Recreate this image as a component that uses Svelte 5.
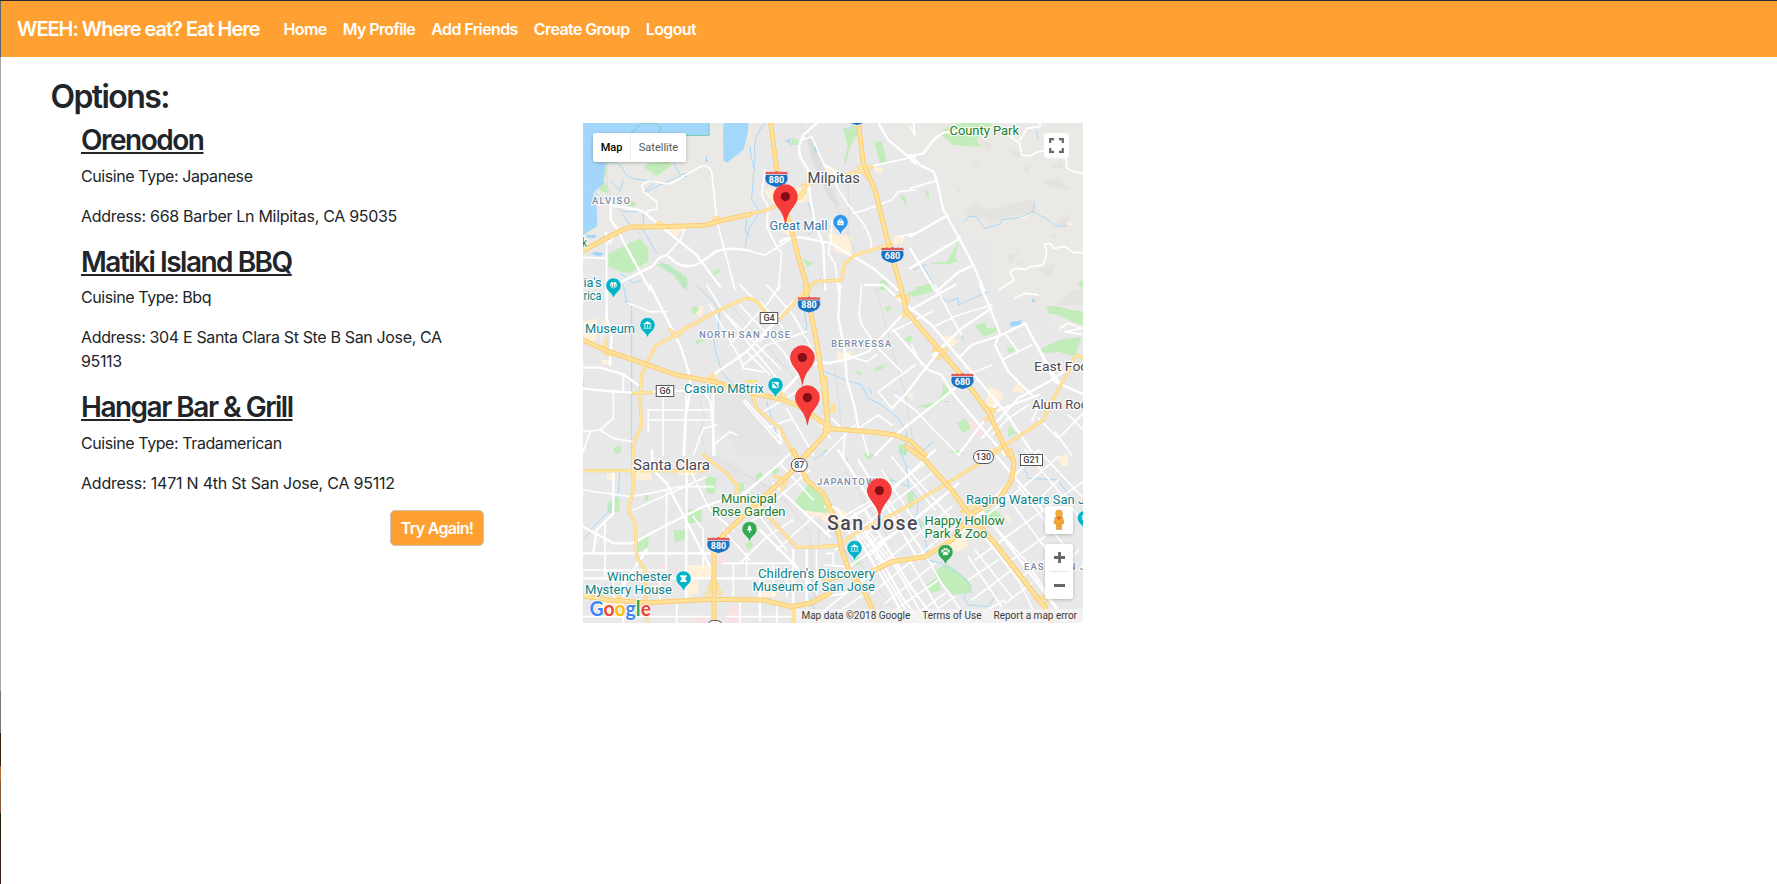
<script>
  const nav = ['Home', 'My Profile', 'Add Friends', 'Create Group', 'Logout'];
  const places = [
    { name: 'Orenodon', type: 'Japanese', address: '668 Barber Ln Milpitas, CA 95035', spacing: -0.3 },
    { name: 'Matiki Island BBQ', type: 'Bbq', address: '304 E Santa Clara St Ste B San Jose, CA 95113', spacing: -0.35 },
    { name: 'Hangar Bar & Grill', type: 'Tradamerican', address: '1471 N 4th St San Jose, CA 95112', spacing: -0.22 }
  ];

  // Map tiles: origin in map space, artwork drawn at three units per pixel.
  const tiles = [
    {
      x: 580, y: 120,
      hill: 'M9 9H510V270L375 312 150 318 60 350 9 390Z',
      water: 'M9 9H388V47H160L85 52 78 110 70 190 40 218 50 260 52 318 9 345ZM430 9H505V30L490 90 440 128 430 120ZM378 105L384 125H376ZM20 345H50L45 355 18 352ZM45 395L72 400 60 410 35 402Z',
      green: 'M68 60H85V125L75 180 85 220 60 212 50 195 76 182 68 130ZM158 40L185 9 240 20 225 45ZM205 130L265 125 275 135 230 168 190 140ZM85 400L180 355 205 385 205 425 150 460 120 455 85 440ZM225 432L265 432 320 470 325 495 312 508 280 465ZM390 470L415 445 420 455 395 472ZM150 240L170 250 160 263 140 255Z',
      beige: 'M245 322H320L285 352Z',
      river: 'M80 130Q120 120 130 150T190 180 205 205 240 195 320 170M9 190L60 230 95 240 130 275 190 275 190 310M130 285L150 320 190 330 230 400M240 425L300 470 320 510M500 300L495 330 510 350M120 460L160 490 185 480M9 215L60 240M95 185L120 215 130 180M280 125L300 165 325 160M430 40H500M430 60H498M432 80H490M435 100H480',
      rail: 'M80 110L82 200 105 260 180 340',
      thin: 'M230 270V245L190 215 185 195 205 183 270 192 360 140Q385 132 395 155L410 300 465 510M230 268L205 272 200 285M9 412L75 415M75 335L90 370 110 335M80 340V510M315 325L300 360 260 405',
      road: 'M92 245V300L115 330 130 365 210 510M100 258Q160 265 190 275L250 325 350 405 420 500M110 492L215 440 240 412 260 405 290 430Q330 450 365 425L410 393Q450 380 510 392',
      hwy: 'M9 392L120 333 150 321 240 320 375 316 430 300 510 283',
      yellow: 'M225 318Q240 300 250 318M400 310Q405 280 420 300'
    },
    {
      x: 745, y: 120,
      hill: 'M0 9H50L30 100 25 200 0 250ZM400 9H510V110L470 85Z',
      water: 'M205 80L220 85 214 100ZM125 60L135 55 133 70Z',
      green: 'M292 22L320 30 320 9 345 30 315 80 303 130 297 125 308 75ZM388 68L410 63 425 125 405 132ZM138 52L162 62 158 76 140 75ZM203 85L220 80 215 102ZM463 225L480 228 487 262ZM172 415L205 430 190 442ZM405 485L425 475 430 510H400Z',
      beige: 'M235 135H250L300 165 295 185 260 175ZM245 340L320 350 320 410 270 395ZM55 210L190 200 185 245 90 260ZM385 140L415 145 410 160 390 158ZM450 345L480 350 475 370 440 375ZM90 300H130L150 350 120 340Z',
      grey: 'M180 40L205 55 235 140 285 260 250 235 200 120Z',
      river: 'M60 9Q20 50 30 110L20 240 45 275 10 330 0 380M15 80Q20 130 30 150M190 250Q205 290 210 310T190 345M235 400Q240 440 235 500M300 30L320 20M120 60L140 75',
      rail: 'M165 9L200 80 245 200 290 290 330 400M215 500L240 440M310 180V330',
      thin: 'M240 135L265 150 275 200 310 255 355 310 375 350 380 385M60 150L50 225 70 260 65 320 95 380 110 400 100 510M0 390L60 405 140 355M260 300V340L250 400 270 430 280 510M460 350L510 340M350 145L510 110M170 60L200 50 240 140M325 280L375 265 440 240 460 215 510 210',
      road: 'M215 9L175 45 162 80 165 110 190 150 195 230 210 310 235 375 240 510M105 365Q130 350 170 353L260 370 300 395 385 445 460 510M395 0L430 60 490 110 510 130',
      hwy: 'M77 9L97 160 115 250 140 330 165 430 190 510M340 9L355 130 390 210 430 370 470 510',
      yellow: 'M0 283L60 272 100 255 150 240 170 220 185 195 220 180 300 165 355 150 380 140M190 505L210 485 290 480 300 430 330 405 440 372M150 240Q190 225 175 195M340 140L365 170'
    },
    {
      x: 910, y: 120,
      hill: 'M90 9H525V510H245V370L180 345 145 300 100 240 85 160 30 100 0 80V9Z',
      shade: 'M165 280L190 245 240 270 300 250 370 240 375 275 300 290 250 310 210 290 180 285ZM390 185L450 175 480 210 420 200ZM440 300L480 280 470 318 430 310ZM340 145L370 130 350 160ZM140 210L155 205 145 220ZM290 405L330 395 300 430ZM320 430L340 425 330 440ZM420 345L450 335 430 355ZM180 130L200 120 210 130ZM420 140L450 120 470 150ZM200 50L250 80 230 90ZM380 450L440 425 420 470ZM300 90L350 100 320 115Z',
      green: 'M88 40L125 15 160 9H250L200 60 215 82 130 75ZM40 208L55 215 60 245ZM50 428L110 425 150 360 135 410 142 425 110 434ZM503 495L525 470V510ZM10 505L60 490 80 510Z',
      river: 'M165 305L175 290 200 290 210 308 225 325 270 312 275 300 330 292 370 275 410 297 435 318 470 318M370 275L375 245M378 30L384 58M10 450L50 432M40 440L80 510',
      beige: 'M320 290L370 278 340 298ZM108 280L130 290 115 290ZM470 305L490 310 478 320Z',
      thin: 'M0 205L80 182M265 510L312 482 300 455 320 445 345 448 360 440 400 435 410 400 405 372 420 370 430 385 465 380 490 397 525 398M300 50L330 70 335 105 360 108 385 95 440 88 470 120 470 145 490 155 525 160M330 60L350 25 390 20V9M0 20L15 45 10 9',
      road: 'M0 105L30 135 70 155 80 180 100 270 145 350 190 435 222 510M0 108L40 100 75 55 100 38 150 34M0 350L105 290M0 445L150 355M80 515L140 460 190 435M0 385L75 510'
    },
    {
      x: 580, y: 285,
      grey2: 'M400 320L510 330 560 410 610 510H480L410 420Z',
      green: 'M332 72L345 62 358 72 340 90ZM345 170L365 155 370 165 350 180ZM100 488L120 480 125 500 105 508ZM200 55L210 50 205 60ZM9 280L15 300 9 315Z',
      beige: 'M9 110L50 100V160L30 180 9 170ZM340 80L370 60 365 100ZM75 95H85V115L60 180 65 130ZM70 225H90V238H65Z',
      river: 'M350 0L400 50 418 80 415 140 400 150 405 190 425 260 460 300M670 60L680 120 675 170M130 0L140 50M560 350L590 450M155 60V510M135 50H145V60',
      rail: 'M360 350L375 400 360 440 380 510M460 70L750 400M620 300L740 440',
      thin: 'M205 375V405H390M205 375H400M100 320V400L60 435 9 440M60 435L100 460 160 470M130 270V320M400 320V440L405 510M440 90L600 250M380 0L430 80 510 180 600 290M480 60L610 200 670 290M450 180L520 100 560 60 600 0M490 240L560 180 680 140M560 0L640 90 700 200M620 370L700 510M690 370L750 460M560 430L640 400M340 510L370 430 410 420M9 500L30 440M550 380L650 320M480 0L540 60M320 320L310 510M250 320V510M540 170L580 120 640 60M500 200L570 270M540 50L610 130M145 55L210 80 260 80M400 480L450 440 470 450M205 405V440M490 350L600 475M495 345L605 465M590 415L605 475M390 60L480 220 490 250 550 260',
      road: 'M9 248H60L130 268 175 300M9 310L50 315 180 325 250 317 390 318M80 0V100L95 150 90 240M210 0L250 80 300 180 325 255 330 290V320L318 390 312 510M370 320L392 350 400 440 400 510M400 285L405 265 480 215 510 190 640 50M610 320L680 245 720 230 750 235',
      hwy: 'M9 165L80 197 190 235 290 270 400 290 520 325 600 342 650 360 690 385 750 430M675 0L710 170 730 300 745 430M750 430L680 510',
      yellow: 'M160 510L163 470 185 420 180 340 185 270 205 225 225 185 300 140 400 85 490 42Q520 35 540 60L560 90 580 108 600 100 680 15M515 325L530 370 600 430 640 510M160 325L215 322M80 160L75 205 100 210M380 285L400 270 410 295M500 290L530 290 520 340M270 135L290 155 320 125M600 320L620 345'
    },
    {
      x: 825, y: 285,
      hill: 'M520 20L550 0H780V160L700 140 640 60Z',
      shade: 'M690 60L740 20 780 10V60ZM620 30L650 40 630 60Z',
      water: 'M555 112L590 105V120L556 125ZM620 42H628V52H620Z',
      green: 'M245 25L310 0 325 20 265 35ZM180 68L195 62 202 72 185 82ZM235 163L262 150 255 175ZM355 295L372 315 350 350 310 370 275 365 330 350 350 330ZM640 195L700 165 770 155 750 215 700 200 665 205ZM665 65L690 62 740 75 780 80V125L730 105 700 90 670 85ZM450 122L480 110 485 130 520 125 520 138 475 155ZM393 415L420 400 438 430 415 445ZM545 190L565 185V200L550 205ZM85 255L110 260 105 272ZM550 420L575 445 550 455ZM150 250L180 237 175 250 155 260ZM218 480L245 475V510H225ZM370 500L400 495 420 510Z',
      beige: 'M480 360L495 305 530 320 535 340 500 370ZM350 155L375 150 400 170 375 190ZM35 205L80 200 80 220 35 225ZM560 320L580 290 600 325ZM250 330L265 320 260 345Z',
      pink: 'M420 395L475 430 475 460 440 440Z',
      river: 'M0 260L60 285 110 300 130 340 170 360 220 400 245 440 240 510M330 10L345 35 370 50 400 40 400 60 490 20M135 310L140 325M410 150L415 165M270 475L290 500 325 470M360 350H370',
      rail: 'M150 0L200 190 240 320 270 510M30 250L50 430',
      thin: 'M110 0L102 90 110 120 160 190 230 260M325 125L400 90 500 60M330 0L360 60 410 150M530 225L620 180M540 145L580 200M270 240L160 320 200 370M440 265L500 240M100 430L160 390 200 420M20 400L60 440 55 510M550 400L610 360M640 400L700 460 780 380M690 440L740 510M60 210L125 230 155 210M210 330L270 375 400 510M110 440L130 510M0 510L90 420M650 340L620 410M550 400L500 450M320 80L200 140M730 390L780 440M570 40L600 25 640 30M705 130L730 115 770 130 720 140 780 150M290 240L260 180',
      road: 'M45 0L40 100 60 200 65 280 90 370 100 430M120 0H175L225 45 320 120 460 285 540 380 620 500M205 135L310 255 350 270 380 320 480 440 540 510M465 0L495 70 525 145 510 180 550 260 620 330M400 220L440 180 530 150 600 115 650 210 690 290 780 330M600 115L635 180 700 290M340 200L240 330 200 370M255 75L390 0M0 235L60 225 130 200 250 70M390 310L210 450 150 510M470 460L580 340 680 285 730 250M400 510L520 350M325 210L410 130 500 70M510 380L640 330',
      hwy: 'M225 0L245 80 340 190 400 260 490 380 550 510M0 430L150 442 210 450 260 470 300 510M0 280L8 400 0 440',
      yellow: 'M500 500L550 475 655 405 680 350 725 270 750 215Q760 205 780 225M325 195H365L340 220M480 370L510 375 480 405M215 35H250L235 95M0 380H25V360'
    },
    {
      x: 580, y: 450,
      grey2: 'M390 0L450 30 520 80 620 150 630 170 500 105 380 40Z',
      green: 'M315 180L365 175V215L320 222ZM375 75L410 85 405 130 380 130ZM640 160L690 95 740 160 740 190 660 180ZM80 160L118 140V185L85 190ZM170 270L205 257 205 290 175 307ZM280 240H315V270L285 277ZM495 285L510 270 520 285 505 300ZM525 75L545 65 550 85 530 95ZM460 100H492V120L475 128ZM195 135H205V152H195ZM220 235L240 230V242ZM570 55L590 50 600 65 580 75ZM725 0H745V15Z',
      beige: 'M320 345H395V385H355V430L320 440ZM165 65H215V90H170ZM650 175L750 190V220ZM80 70H105V90H82ZM50 440L130 455 100 500 60 480ZM290 55H350V75H295ZM530 400H590V440H540Z',
      pink: 'M415 290L435 290 438 345 415 340ZM440 470L480 465V518H440ZM335 500H385V518H335ZM240 340H265V355H240Z',
      river: 'M120 60L115 130 80 190 40 230 15 265M750 0L700 30M690 440L700 480',
      rail: 'M380 10L470 60 600 130 690 250 700 450M720 200L700 520',
      thin: 'M9 120L150 140 210 130 300 110 400 110M75 220V385M260 120L258 310V385M100 385V440M160 180L380 80M480 340L560 260 640 210M430 240L510 330M590 300L700 200M500 310V380M340 200L370 240V350M430 340H640M9 360H260M130 390V520M240 390V450M290 460V520M460 340V440M580 340V440M620 385V440M480 460V520M590 460V520M330 60L390 180 460 240M9 500H390M440 500H640M540 200L620 300M600 40L700 150M710 300V430M520 210L610 130 690 60M490 230L580 170',
      road: 'M215 0L220 60 260 100 390 350M9 230L100 280 160 280 230 240 370 170 430 150M9 310H390M9 385H640M100 70V190L50 240 40 310M320 60L318 450M540 240L640 340 700 410M580 100L750 260M640 300V470M680 290V470M470 150L600 40 640 0M540 385V510M200 300L100 450M650 60L720 120',
      hwy: 'M9 438L90 450 200 458 400 448 550 450 630 470 690 460 750 430M402 518V300L430 255 540 150 630 70 690 0M640 0L680 90 730 130 755 190',
      yellow: 'M9 62H160L380 62M158 0L160 120 145 180 165 220 170 320 195 360 200 518M370 15L440 70 475 110 465 140M530 160L650 292 750 290M640 465V518M60 435Q90 405 120 445M380 440L400 380 420 430M585 80L620 90 605 120'
    },
    {
      x: 825, y: 450,
      green: 'M325 365L365 340 430 390 442 428 385 435 350 400ZM305 405L335 380 350 420 320 430ZM480 180L515 180 540 210 500 230ZM245 130L265 125 268 160 255 180ZM280 200L300 225 285 235ZM115 15L130 5 150 15 130 30ZM55 20L70 25 68 40ZM190 80L205 90 195 105ZM85 320H105V345H90ZM275 0L300 15 285 25Z',
      beige: 'M380 280L420 250 430 290 400 305 360 290ZM700 20L730 10V45L710 50ZM540 190L560 210 550 220ZM30 170L70 190 50 240Z',
      river: 'M225 0L245 50 250 110 280 150 275 200 300 260 310 330 350 340M350 340L400 370 440 410 415 440 430 465 490 470 510 440M580 0L600 60 610 85 700 90 720 120 760 160M200 90L250 110M20 160L30 250 70 320 90 340',
      rail: 'M0 190L60 270 160 420 240 510M60 60L200 280',
      thin: 'M200 20L330 180M300 40L160 140 20 220M320 70L200 160 30 300M350 140L240 230 60 360M380 170L100 400M400 220L140 430M250 60L390 220M170 60L300 260M140 80L230 210 310 330M500 220L600 330 700 480M470 250L580 390 640 510M450 300L560 440M430 320L530 470M600 0L730 160 780 220M640 0L780 150M540 130L680 320M580 110L720 290M480 200L620 90 700 20M530 270L670 170 780 90M450 330L600 220M560 330L660 260M590 380L700 300M430 390L520 330M440 450L560 360M540 460L620 400M210 480L340 390M180 460L330 340M250 510L360 430M290 510L390 440M430 510L540 450M160 340L260 510M200 330L300 510M250 325L360 510M310 330L350 400 430 510M5 310H25V345M0 345L60 350M0 480L100 400M20 500L120 430M0 200L40 200M700 90L640 150M760 300L720 350',
      road: 'M100 30L210 210 280 330M40 0L180 220M0 170Q40 165 50 200L80 260M90 190L230 440 280 510M60 200L200 430 240 510M120 180L250 400 330 510M0 250L180 140 330 0M320 300L420 240 640 0M460 170L540 270 660 430 720 510M420 180L330 60 280 0M500 0L550 60 680 210M160 280L270 210 400 100M0 440L60 430 200 330',
      white: 'M100 250L170 340M108 245L178 335M116 240L186 330M124 235L194 325M105 270L140 240M120 295L160 260M135 315L180 280M150 330L195 300',
      hwy: 'M245 -10L300 30 380 120 430 190 510 280 650 460 690 518M135 368L200 335 300 320 380 270 440 190 520 150 560 90 567 40 555 0M0 140L35 220 50 300 75 370 110 410 130 450 160 518M0 390L60 375 135 368',
      yellow: 'M0 287H40L90 250 200 195 350 110 480 30 525 0M410 185Q470 150 520 160M420 230L480 230M630 445Q680 430 660 480'
    }
  ];
  const kinds = ['hill', 'shade', 'grey', 'grey2', 'beige', 'pink', 'green', 'water', 'river', 'rail', 'thin', 'white', 'road', 'yellowcase', 'yellow', 'hwycase', 'hwy'];

  // text, x, baseline, width, size, class
  const labels = [
    ['County Park', 949.5, 134.5, 69.5, 13, 'park'],
    ['Milpitas', 807.5, 183, 52.5, 14, 'city'],
    ['Great Mall', 769.5, 230, 58, 13, 'mall'],
    ['ALVISO', 592, 204.3, 38, 9.5, 'area'],
    ['k', 582, 247, 5, 13, 'park'],
    ["ia's", 583.5, 286.5, 18, 13, 'poi'],
    ['rica', 583.5, 299.5, 18, 13, 'poi'],
    ['Museum', 585, 332.5, 50, 13, 'poi'],
    ['NORTH SAN JOSE', 699, 338.3, 91, 9.5, 'area'],
    ['BERRYESSA', 831, 347, 60, 9.5, 'area'],
    ['Casino M8trix', 684, 392.5, 80, 13, 'poi'],
    ['East Foothills', 1034, 370.5, 84, 13.5, 'city'],
    ['Alum Rock', 1032, 408.5, 62, 13.5, 'city'],
    ['Santa Clara', 633, 470, 77, 14, 'city'],
    ['Municipal', 721, 502.5, 56, 13, 'park'],
    ['Rose Garden', 712, 515.5, 73.5, 13, 'park'],
    ['JAPANTOWN', 817, 485.3, 65, 9.5, 'area'],
    ['San Jose', 827, 529.8, 90.5, 19.5, 'city big'],
    ['Happy Hollow', 924.5, 524.5, 80, 13, 'park'],
    ['Park & Zoo', 924.5, 537.5, 63, 13, 'park'],
    ['Raging Waters San Jose', 966, 503.5, 140, 13, 'poi'],
    ["Children's Discovery", 758, 577.8, 117, 13, 'poi'],
    ['Museum of San Jose', 752.5, 590.8, 122.5, 13, 'poi'],
    ['Winchester', 607, 580.5, 65, 13, 'poi'],
    ['Mystery House', 585, 593.5, 87, 13, 'poi'],
    ['EAST SAN JOSE', 1024, 570.3, 82, 9.5, 'area']
  ];
  const shields = [['880', 776.5, 179], ['680', 892.5, 255], ['880', 809, 304.5], ['680', 962.5, 381], ['880', 718.5, 545], ['', 857, 117]];
  const boxes = [['G4', 769, 318, 17.5], ['G6', 665, 391, 17.5], ['G21', 1031.5, 460, 22]];
  const ovals = [['87', 799.3, 465, 16], ['130', 983.5, 457, 20], ['', 715, 627, 16]];
  const pois = [
    [840.5, 222, '#2e96ea', 'bag'], [613.5, 285.5, '#00b4c8', 'fan'], [647.5, 325, '#00b4c8', 'museum'],
    [775.5, 385, '#00b4c8', 'dice'], [749.5, 529, '#34a853', 'tree'], [683.5, 578.5, '#00b4c8', 'tower'],
    [854.5, 548, '#00b4c8', 'museum'], [945.5, 552, '#34a853', 'paw'], [1085, 518, '#00b4c8', 'fan']
  ];
  const glyphs = {
    bag: 'M-3.5-1.5H3.5V3.5H-3.5ZM-2-1.5V-3Q0-5 2-3V-1.5H1V-2.5Q0-3.6-1-2.5V-1.5Z',
    fan: 'M-4-1L-2.5-3.5 0-4 2.5-3.5 4-1 3 2 1 3V4H-1V3L-3 2Z',
    museum: 'M-4.5-1.5L0-4.2 4.5-1.5V-.7H-4.5ZM-3.5 0H-2.5V2.5H-3.5ZM-.5 0H.5V2.5H-.5ZM2.5 0H3.5V2.5H2.5ZM-4.5 3H4.5V4H-4.5Z',
    dice: 'M-3.5-3.5H3.5V3.5H-3.5Z',
    tree: 'M0-4.5L2.2-1.5H1.2L3 1.5H.7V4H-.7V1.5H-3L-1.2-1.5H-2.2Z',
    tower: 'M-3.5-4H-2V-3H-.7V-4H.7V-3H2V-4H3.5V-1.5H2L2.5 2H3.5V4H-3.5V2H-2.5L-2-1.5H-3.5Z',
    paw: 'M-3 3Q-3 1.5-1.5 0 0-1 1.5 0 3 1.5 3 3 1.5 4 0 3-1.5 4-3 3ZM-4.5-1A1.2 1.4 0 1 0-2.2-1 1.2 1.4 0 1 0-4.5-1ZM-2.3-3A1.1 1.4 0 1 0-.1-3 1.1 1.4 0 1 0-2.3-3ZM.2-3A1.1 1.4 0 1 0 2.4-3 1.1 1.4 0 1 0 .2-3ZM2.3-1A1.2 1.4 0 1 0 4.6-1 1.2 1.4 0 1 0 2.3-1Z'
  };
  const pins = [[785.4, 184], [802.4, 345], [807.4, 385], [879.4, 478]];
  const logo = [['G', '#4285f4'], ['o', '#ea4335'], ['o', '#fbbc05'], ['g', '#4285f4'], ['l', '#34a853'], ['e', '#ea4335']];
</script>

<div class="window">
  <header>
    <a class="brand" href="#home">WEEH: Where eat? Eat Here</a>
    <nav>
      {#each nav as item}<a href="#{item}">{item}</a>{/each}
    </nav>
  </header>

  <main>
    <h2>Options:</h2>
    <div class="columns">
      <section class="options">
        {#each places as p}
          <h3>{p.name}</h3>
          <p class="type">Cuisine Type: {p.type}</p>
          <p style="letter-spacing: {p.spacing}px">Address: {p.address}</p>
        {/each}
        <button class="again">Try Again!</button>
      </section>

      <section class="map">
        <svg class="canvas" viewBox="583 123 500 500" width="500" height="500">
          <rect x="583" y="123" width="500" height="500" fill="#e8e8e8" />
          {#each kinds as kind}
            {#each tiles as t}
              {@const d = t[kind.replace('case', '')]}
              {#if d}
                <path class={kind} {d} transform="translate({t.x} {t.y}) scale(.33333)" />
              {/if}
            {/each}
          {/each}
          <path d="M631 133L642 123H655L661 128 657 136M655 135.500H709V123" fill="none" stroke="#6cc79b" stroke-width=".9" stroke-dasharray="3 1.500" />

          {#each shields as [num, x, y]}
            <g transform="translate({x} {y})">
              <path d="M-11-4.5H11Q13 1 9 5 5 7.5 0 8.5-5 7.5-9 5-13 1-11-4.5Z" fill="#1a73c0" stroke="#fff" stroke-width=".7" />
              <path d="M-10.5-7.5Q-8-6.5-6-7.5-3-6.5 0-8 3-6.5 6-7.5 8-6.5 10.5-7.5L11.5-4.8H-11.5Z" fill="#e25b5b" />
              <text class="num" x="0" y="3.800" text-anchor="middle">{num}</text>
            </g>
          {/each}
          {#each boxes as [t, x, y, w]}
            <rect x={x - w / 2} y={y - 5.5} width={w} height="11" fill="#fff" stroke="#555" />
            <text class="tag" {x} y={y + 3.4} text-anchor="middle">{t}</text>
          {/each}
          {#each ovals as [t, x, y, w]}
            <rect x={x - w / 2} y={y - 6.5} width={w} height="13" rx="6.5" fill="#fff" stroke="#555" />
            <text class="tag" {x} y={y + 3.4} text-anchor="middle">{t}</text>
          {/each}

          {#each labels as [t, x, y, w, s, c]}
            <text class="label {c}" {x} {y} font-size={s} textLength={w} lengthAdjust={c === 'area' || c === 'city big' ? 'spacing' : 'spacingAndGlyphs'}>{t}</text>
          {/each}

          {#each pois as [x, y, color, g]}
            <g transform="translate({x} {y})">
              <path d="M0 12.5Q-1.5 8.5-5 5.8A7.6 7.6 0 1 1 5 5.8Q1.5 8.5 0 12.5Z" fill={color} stroke="#fff" stroke-width=".5" />
              <path d={glyphs[g]} fill="#fff" transform="scale(.9)" />
              {#if g === 'dice'}<path d="M-1.8-1.8L1.8 1.8" stroke={color} stroke-width="1.6" />{/if}
              {#if g === 'fan'}<path d="M0 4V-2.5M-1 3L-2.5-1M1 3L2.5-1" stroke={color} stroke-width=".8" />{/if}
              {#if g === 'bag'}<path d="M-1.5 1Q0 3 1.5 1" fill="none" stroke={color} stroke-width=".7" />{/if}
            </g>
          {/each}

          {#each pins as [x, y]}
            <g transform="translate({x} {y})">
              <path d="M0 41Q-1 34-4 28.5L-10.4 19.5A12.4 12.4 0 1 1 10.4 19.5L4 28.5Q1 34 0 41Z" fill="#f63b3b" />
              <circle cy="12.6" r="4.6" fill="#850d16" />
            </g>
          {/each}

          <text class="logo" x="589.5" y="615.500" textLength="61.5" lengthAdjust="spacingAndGlyphs">{#each logo as [ch, color]}<tspan fill={color}>{ch}</tspan>{/each}</text>
        </svg>

        <div class="type-switch"><b>Map</b><span>Satellite</span></div>
        <button class="ctl full" aria-label="Fullscreen">
          <svg width="15" height="15" viewBox="0 0 15 15"><path class="corner" d="M1.2 5V1.2H5M10 1.2H13.8V5M13.8 10V13.8H10M5 13.8H1.2V10" fill="none" stroke="#666" stroke-width="2.2" /></svg>
        </button>
        <div class="side">
          <button class="ctl pegman" aria-label="Street View">
            <svg width="14" height="22" viewBox="0 0 14 22">
              <path d="M3.500 8Q7 6 10.500 8L12 14 10.800 15 10 13 9.5 20.500H7.4L7 16 6.6 20.500H4.5L4 13 3.200 15 2 14Z" fill="#f5a72d" stroke="#c98b3a" stroke-width=".6" />
              <circle cx="7" cy="4.500" r="3.400" fill="#f9ad32" stroke="#c98527" stroke-width=".5" />
              <path d="M4.500 8.200L7 11 9.500 8.200Z" fill="#df5b36" />
            </svg>
          </button>
          <div class="ctl zoom">
            <svg width="28" height="55" viewBox="0 0 28 55"><path class="corner" d="M9 13.5H20M14.5 8V19M9 41.5H20" stroke="#666" stroke-width="2.800" /><path d="M5 27.5H23" stroke="#e6e6e6" /></svg>
          </div>
        </div>
        <div class="credits"><span>Map data ©2018 Google</span><span>Terms of Use</span><span>Report a map error</span></div>
      </section>
    </div>
  </main>
</div>

<style>
  :global(body) { background: #fff; overflow: hidden; }
  * { box-sizing: border-box; }
  .window {
    min-height: 884px;
    border-top: 1px solid #2b2930;
    font: 16px/24px Inter, sans-serif;
    color: #212529;
    background: linear-gradient(#60686c 0 56px, #a5a5a5 56px 690px, #72757c 690px 732px, #38200f 732px 765px, #b36b3c 765px 780px, #8a5830 780px 812px, #20200c 812px 840px, #3c1c14 840px) left / 1px 100% no-repeat;
    padding-left: 1px;
  }
  header {
    height: 56px;
    padding: 8px 16px;
    display: flex;
    align-items: center;
    background: #ffa132;
  }
  header a { color: #fff; text-decoration: none; font-weight: 560; }
  .brand { font-size: 20px; line-height: 30px; letter-spacing: -1.02px; margin-right: 16px; white-space: nowrap; }
  nav { display: flex; letter-spacing: -0.6px; }
  nav a { padding: 8px; white-space: nowrap; }
  main { padding: 19.6px 0 0 49.5px; }
  h2, h3, p { margin: 0; }
  h2 { font-size: 32px; line-height: 38.4px; font-weight: 560; padding-top: 1px; margin-bottom: 7px; letter-spacing: -1.6px; }
  .columns { display: grid; grid-template-columns: 403px 500px; column-gap: 99px; padding-left: 30.5px; align-items: start; }
  .options { display: flex; flex-direction: column; }
  h3 { font-size: 28px; line-height: 33.6px; font-weight: 560; padding-top: 1px; margin-bottom: 6px; letter-spacing: -1.5px; text-decoration: underline; text-decoration-thickness: 2px; text-underline-offset: 2px; }
  p { margin-bottom: 16px; padding-right: 25px; }
  p:last-of-type { margin-bottom: 16px; }
  .options p + h3 { margin-top: 1px; }
  .type { letter-spacing: -0.42px; }
  .again {
    align-self: flex-end;
    width: 94px;
    height: 36px;
    margin-top: -1px;
    padding: 0;
    border: 1px solid #c8c2ba;
    border-radius: 5px;
    background: #ffa132;
    color: #fff;
    font: 560 16px Inter, sans-serif;
    letter-spacing: -0.7px;
  }
  .map { position: relative; width: 500px; height: 500px; overflow: hidden; font-family: Roboto, sans-serif; }
  .canvas { display: block; }
  path { stroke-linejoin: round; stroke-linecap: round; }
  .corner { stroke-linejoin: miter; stroke-linecap: butt; }
  .hill { fill: #ebe9e5; }
  .shade { fill: #e5e3df; }
  .grey { fill: #dddfe1; }
  .grey2 { fill: #e5e5e6; }
  .beige { fill: #fff0d9; }
  .pink { fill: #f7e1e2; }
  .green { fill: #c2edbb; }
  .water { fill: #a3d6fb; }
  .river { fill: none; stroke: #a9d8f8; stroke-width: 3; }
  .rail { fill: none; stroke: #d8d9da; stroke-width: 2.5; }
  .thin { fill: none; stroke: #fff; stroke-width: 5; }
  .white { fill: none; stroke: #fff; stroke-width: 4; }
  .road { fill: none; stroke: #fff; stroke-width: 7; }
  .yellowcase { fill: none; stroke: #fbd27c; stroke-width: 10; }
  .yellow { fill: none; stroke: #ffe6a5; stroke-width: 6; }
  .hwycase { fill: none; stroke: #fbcd73; stroke-width: 15; }
  .hwy { fill: none; stroke: #ffe19a; stroke-width: 9; }
  .label { paint-order: stroke; stroke: #fff; stroke-opacity: .85; stroke-width: 2.5px; stroke-linejoin: round; }
  .park { fill: #1b8030; }
  .poi { fill: #0b858d; }
  .mall { fill: #3878a8; }
  .city { fill: #4c4954; }
  .area { fill: #7b8da8; font-weight: 500; }
  .big { font-weight: 500; }
  .num { fill: #fff; font-size: 9px; font-weight: 700; }
  .tag { fill: #444; font-size: 9px; font-weight: 500; }
  .logo { font: 700 20.5px Lato, sans-serif; paint-order: stroke; stroke: #fff; stroke-width: 1.5px; }
  .type-switch { position: absolute; left: 10px; top: 10px; height: 29px; display: flex; align-items: center; background: #fff; border-radius: 2px; box-shadow: 0 1px 4px -1px #0006; font-size: 11px; line-height: 29px; color: #565656; }
  .type-switch b { width: 38px; text-align: center; color: #000; font-weight: 500; border-right: 1px solid #eee; }
  .type-switch span { width: 55px; text-align: center; }
  .ctl { display: grid; place-items: center; padding: 0; border: 0; background: #fff; border-radius: 2px; box-shadow: 0 1px 4px -1px #0005; }
  .ctl svg { display: block; }
  .full { position: absolute; left: 461px; top: 10px; width: 25px; height: 25px; border-radius: 3px; box-shadow: none; }
  .side { position: absolute; left: 462px; top: 383px; display: flex; flex-direction: column; gap: 10px; }
  .pegman { width: 28px; height: 28px; }
  .zoom { width: 28px; height: 55px; }
  .credits { position: absolute; right: 0; bottom: 0; height: 14px; display: flex; gap: 12px; padding: 0 6px 0 5px; background: #f5f5f5c4; font-size: 10px; line-height: 14px; color: #3c3c3c; white-space: nowrap; }
</style>
